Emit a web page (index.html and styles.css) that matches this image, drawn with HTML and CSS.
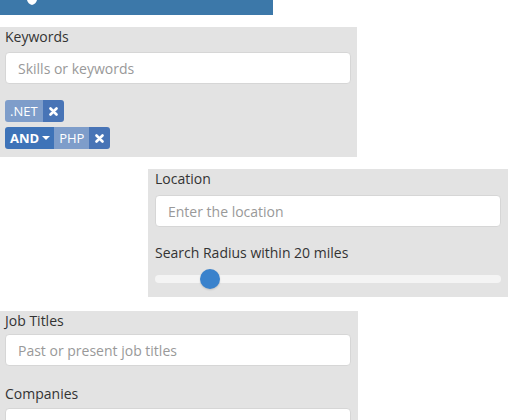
FILE: index.html
```
<!DOCTYPE html>
<html>
<head>
<meta charset="utf-8">
<link rel="stylesheet" href="styles.css">
</head>
<body>
<div class="topbar">
  <svg class="topicon" width="10" height="6" viewBox="0 0 10 6"><path d="M0 0 H10 Q9 4 5 5 Q1 4 0 0 Z" fill="#fff"/></svg>
</div>

<section class="panel panel-keywords">
  <div class="label">Keywords</div>
  <input class="field" type="text" placeholder="Skills or keywords">
  <div class="tags">
    <div class="tag">
      <span class="tag-text">.NET</span>
      <span class="tag-remove"><svg width="9" height="9" viewBox="0 0 9 9"><path d="M1.5 1.5 L7.5 7.5 M7.5 1.5 L1.5 7.5" stroke="#fff" stroke-width="2.6" stroke-linecap="round"/></svg></span>
    </div>
    <div class="tag">
      <span class="tag-op">AND <span class="caret"></span></span>
      <span class="tag-text">PHP</span>
      <span class="tag-remove"><svg width="9" height="9" viewBox="0 0 9 9"><path d="M1.5 1.5 L7.5 7.5 M7.5 1.5 L1.5 7.5" stroke="#fff" stroke-width="2.6" stroke-linecap="round"/></svg></span>
    </div>
  </div>
</section>

<section class="panel panel-location">
  <div class="label">Location</div>
  <input class="field" type="text" placeholder="Enter the location">
  <div class="label label-radius">Search Radius within 20 miles</div>
  <div class="slider">
    <div class="track"></div>
    <div class="thumb"></div>
  </div>
</section>

<section class="panel panel-jobs">
  <div class="label">Job Titles</div>
  <input class="field" type="text" placeholder="Past or present job titles">
  <div class="label label-companies">Companies</div>
  <input class="field" type="text" placeholder="">
</section>
</body>
</html>
```
FILE: styles.css
```
* { box-sizing: border-box; }
html, body { margin: 0; padding: 0; background: #fff; }
body {
  font-family: "Open Sans", "Liberation Sans", sans-serif;
  font-size: 14px;
  color: #333;
  width: 508px;
  height: 420px;
  overflow: hidden;
}
.topbar {
  width: 273px;
  height: 15px;
  background: #3c78a9;
  position: relative;
}
.topicon { position: absolute; left: 27px; top: 0; }

.panel {
  background: #e3e3e3;
  display: flex;
  flex-direction: column;
}
.label {
  line-height: 20px;
  height: 20px;
  color: #333;
}
.field {
  display: block;
  width: 100%;
  height: 32px;
  border: 1px solid #d6d6d6;
  border-radius: 4px;
  background: #fff;
  padding: 0 12px;
  font-family: "Open Sans", "Liberation Sans", sans-serif;
  font-size: 14px;
  color: #555;
  outline: none;
}
.field::placeholder { color: #999; }

.panel-keywords {
  margin-top: 12px;
  width: 357px;
  padding: 0 6px 8px 5px;
}
.panel-keywords .field { margin-top: 5px; }
.tags {
  margin-top: 16px;
  display: flex;
  flex-direction: column;
  align-items: flex-start;
  gap: 5px;
}
.tag {
  display: flex;
  height: 22px;
  border-radius: 3px;
  overflow: hidden;
  color: #fff;
  font-size: 13px;
  line-height: 22px;
}
.tag-text {
  background: #7e9dca;
  padding: 0 5px;
}
.tag-op {
  background: #3e73b8;
  font-weight: 700;
  font-size: 13px;
  padding: 0 4px 0 5px;
  display: flex;
  align-items: center;
  gap: 3px;
}
.caret {
  width: 0; height: 0;
  border-left: 4px solid transparent;
  border-right: 4px solid transparent;
  border-top: 4px solid #fff;
}
.tag-remove {
  background: #4874b6;
  width: 21px;
  display: flex;
  align-items: center;
  justify-content: center;
}

.panel-location {
  margin-top: 12px;
  margin-left: 148px;
  width: 360px;
  padding: 0 7px 0 7px;
  height: 128px;
}
.panel-location .field { margin-top: 6px; }
.label-radius { margin-top: 16px; }
.slider {
  position: relative;
  margin-top: 12px;
  height: 8px;
}
.track {
  height: 8px;
  border-radius: 4px;
  background: #f4f4f4;
}
.thumb {
  position: absolute;
  left: 45px;
  top: -6px;
  width: 20px;
  height: 20px;
  border-radius: 50%;
  background: #3a82cc;
  box-shadow: 0 1px 2px rgba(0,0,0,0.15);
}

.panel-jobs {
  margin-top: 14px;
  width: 358px;
  padding: 0 7px 0 5px;
  height: 120px;
}
.panel-jobs .field { margin-top: 3px; flex-shrink: 0; }
.label-companies { margin-top: 18px; }
.panel-jobs .label-companies + .field { margin-top: 4px; }
```
